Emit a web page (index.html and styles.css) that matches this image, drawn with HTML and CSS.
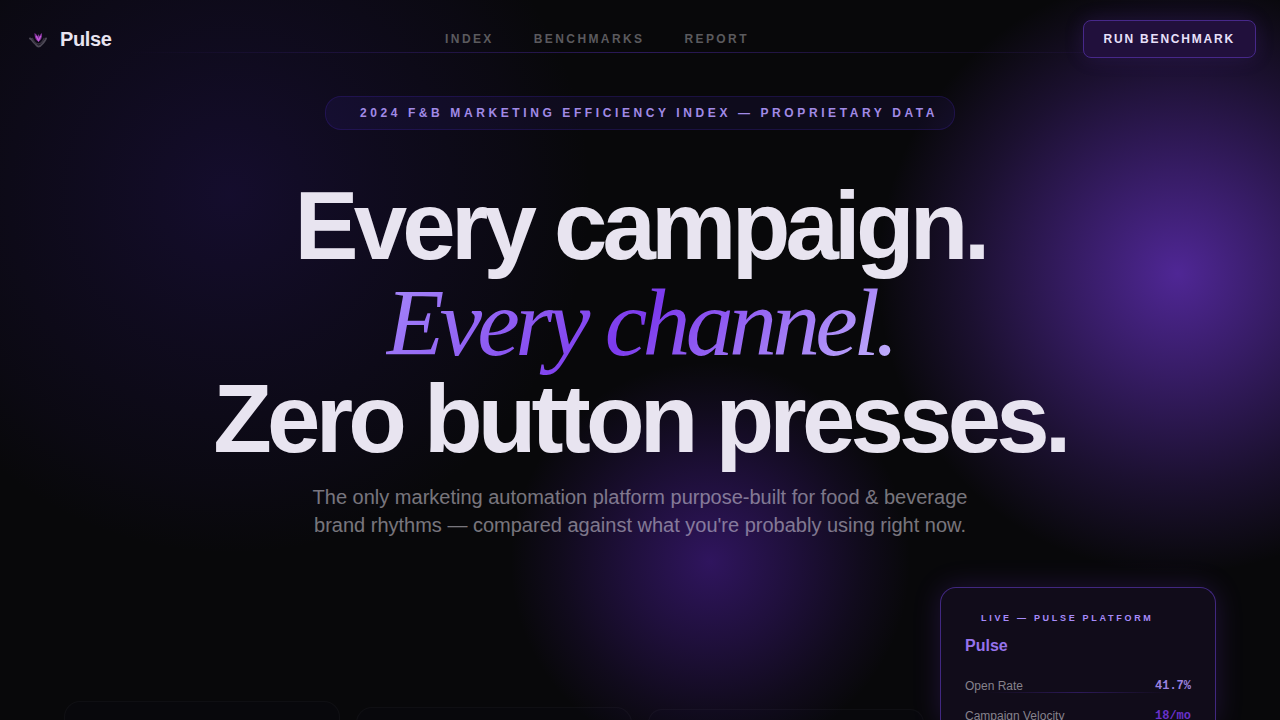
FILE: index.html
```html
<!DOCTYPE html>
<html lang="en">
<head>
<meta charset="utf-8">
<meta name="viewport" content="width=device-width, initial-scale=1">
<title>Pulse</title>
<link rel="stylesheet" href="styles.css">
</head>
<body>
<div class="page">
  <header class="topbar">
    <a class="brand" href="#">
      <svg class="brand-mark" viewBox="0 0 28 28" aria-hidden="true">
        <path d="M6 13.500c2 .5 2.500 3 4.500 4.500 1.500 1.200 2.500 3.500 4 3.500s3-1.500 4.200-3c1.500-2 2.300-2.500 3.300-5" fill="none" stroke="#4d4956" stroke-width="2" stroke-linecap="round"/>
        <path d="M8.500 13.500c1.500 3.500 3.500 5.500 6 5.500s4-2 5.500-5.500" fill="none" stroke="#37323f" stroke-width="1.400" stroke-linecap="round"/>
        <path d="M10.500 8c1.600.8 2.600 2 3.200 3.500.1-1 .4-1.800.8-2.500.4.700.6 1.500.7 2.500.6-1.500 1.500-2.600 2.800-3.500.2 4-.7 7.500-3.500 8.500-2.800-1-4-4.500-4-8.500z" fill="#7f3296"/>
        <path d="M12.500 11.500l2 4 2-4" fill="none" stroke="#c45bdc" stroke-width="1.400" stroke-linecap="round"/>
      </svg>
      <span>Pulse</span>
    </a>
    <nav class="links">
      <a href="#index">Index</a>
      <a href="#benchmarks">Benchmarks</a>
      <a href="#report">Report</a>
    </nav>
    <button class="cta" type="button">RUN BENCHMARK</button>
  </header>

  <main class="hero">
    <p class="badge">2024 F&amp;B Marketing Efficiency Index — Proprietary Data</p>
    <h1 class="headline">Every campaign.<br><em>Every channel.</em><br>Zero button presses.</h1>
    <p class="lede">The only marketing automation platform purpose-built for food &amp; beverage brand rhythms — compared against what you're probably using right now.</p>
    <section class="cards">
      <div class="card card-first"></div>
      <div class="card card-second"></div>
      <div class="card card-third"></div>
      <article class="card card-live">
        <p class="live">Live — Pulse Platform</p>
        <h2 class="card-title">Pulse</h2>
        <dl class="stats">
          <div class="stat"><dt>Open Rate</dt><dd>41.7%</dd></div>
          <div class="stat"><dt>Campaign Velocity</dt><dd class="deep">18/mo</dd></div>
        </dl>
      </article>
    </section>
  </main>
</div>
</body>
</html>
```
FILE: styles.css
```css
* { box-sizing: border-box; }

body {
  margin: 0;
  background: #08080a;
  color: #e8e4f0;
  font-family: "Liberation Sans", Arial, sans-serif;
}

h1, h2, p, dl, dd { margin: 0; }

a { color: inherit; text-decoration: none; }

.page {
  display: flex;
  flex-direction: column;
  height: 100vh;
  overflow: hidden;
  background:
    radial-gradient(circle 300px at 92% 38%, #7c3aed9c, #7c3aed66 34%, #7c3aed2b 70%, #7c3aed00),
    radial-gradient(circle 200px at 55.5% 78%, #6a28dc66, #6a28dc3d 40%, #6a28dc17 75%, #6a28dc00),
    radial-gradient(circle 360px at 18% 27%, #3a1c9540, #3a1c9526 40%, #3a1c950f 80%, #3a1c9500);
}

.topbar {
  position: relative;
  display: flex;
  align-items: center;
  justify-content: space-between;
  padding: 20px 24px;
}

.topbar::after {
  content: "";
  position: absolute;
  inset: 52px 0 auto;
  height: 1px;
  background: linear-gradient(90deg, #7c3aed00 10%, #6d3aed59 50%, #7c3aed00 90%);
}

.brand {
  display: flex;
  align-items: center;
  gap: 8px;
  font-size: 20px;
  font-weight: 700;
  letter-spacing: -0.02em;
}

.brand-mark { width: 28px; height: 28px; }

.links {
  display: flex;
  gap: 40px;
  color: #5b5a5e;
  font-size: 12px;
  font-weight: 700;
  letter-spacing: 0.2em;
  text-transform: uppercase;
}

.cta {
  position: relative;
  z-index: 1;
  padding: 11px 20px;
  border: 1px solid #47288a;
  border-radius: 8px;
  background: #21103c;
  box-shadow: 0 0 20px #7c3aed26;
  color: #e8e0fa;
  font: 700 12px/14px "Liberation Sans", Arial, sans-serif;
  letter-spacing: 0.15em;
}

.hero {
  display: flex;
  flex: 1;
  flex-direction: column;
  align-items: center;
  padding: 18px 64px 0;
  text-align: center;
}

.badge {
  padding: 9px 16px 9px 34px;
  border: 1px solid #5b2eed2e;
  border-radius: 16px;
  background: #5b2eed14;
  color: #a18ae6;
  font-size: 12px;
  font-weight: 700;
  line-height: 14px;
  letter-spacing: 0.3em;
  text-transform: uppercase;
}

.headline {
  margin-top: 48px;
  font-size: 96px;
  line-height: 1;
  letter-spacing: -0.05em;
}

.headline em {
  background: linear-gradient(135deg, #a78bfa, #7c3aed 50%, #c4b5fd);
  background-clip: text;
  -webkit-background-clip: text;
  color: transparent;
  font-family: "Liberation Serif", "Times New Roman", serif;
  font-weight: 400;
}

.lede {
  max-width: 680px;
  margin-top: 16px;
  color: #e8e4f080;
  font-size: 20px;
  line-height: 28px;
}

.cards {
  display: grid;
  flex: 1;
  grid-template-columns: repeat(4, 1fr);
  gap: 16px;
  width: 100%;
  margin-top: 48px;
  text-align: left;
}

.card {
  border: 1px solid #ffffff08;
  border-bottom: 0;
  border-radius: 16px 16px 0 0;
  background: #7c3aed03;
}

.card-first { margin-top: 114px; }
.card-second { margin-top: 120px; }
.card-third { margin-top: 122px; }

.card-live {
  padding: 24px 24px 0;
  border-color: #412880;
  background: #110c1a;
  box-shadow: 0 0 28px #7c3aed33;
}

.live {
  padding-left: 16px;
  color: #a78bfa;
  font-size: 9px;
  font-weight: 700;
  line-height: 12px;
  letter-spacing: 0.3em;
  text-transform: uppercase;
}

.card-title {
  margin-top: 12px;
  color: #9673ec;
  font-size: 16px;
  line-height: 20px;
}

.stats {
  display: grid;
  gap: 16px;
  margin-top: 23px;
  font-size: 12px;
  line-height: 14px;
}

.stat {
  display: flex;
  justify-content: space-between;
  background: linear-gradient(90deg, #7c3aed00 10%, #6d3aed4d 50%, #7c3aed00 90%) 0 100% / 100% 1px no-repeat;
}

.stat dt { color: #86828c; }

.stat dd {
  color: #9b82e0;
  font-family: "Liberation Mono", "Courier New", monospace;
  font-weight: 700;
}

.stat .deep { color: #6931c9; }
```
